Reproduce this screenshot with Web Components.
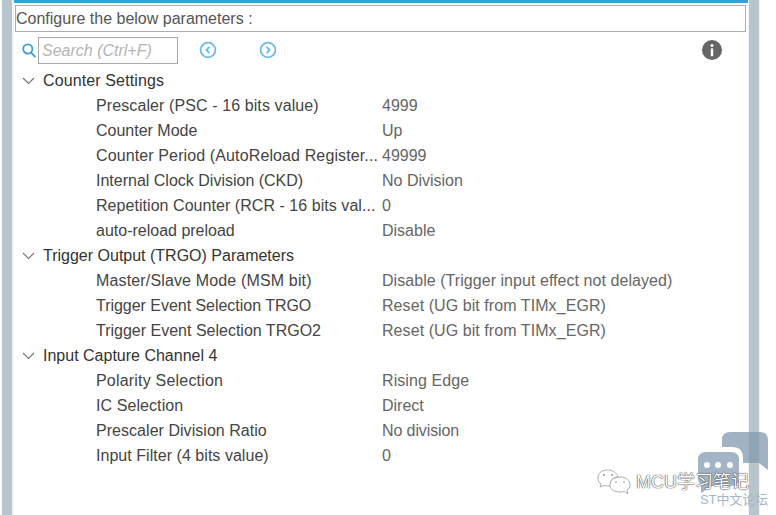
<!DOCTYPE html>
<html>
<head>
<meta charset="utf-8">
<title>Parameters</title>
<style>
  html, body { margin: 0; height: 100%; background: #fff; }
  body { font-family: "Liberation Sans", Arial, sans-serif; font-size: 16px; color: #444; overflow: hidden; }
</style>
</head>
<body>
<config-panel>
  <tool-bar></tool-bar>
  <param-group title="Counter Settings" track=".12">
    <param-row name="Prescaler (PSC - 16 bits value)" value="4999" track=".1"></param-row>
    <param-row name="Counter Mode" value="Up"></param-row>
    <param-row name="Counter Period (AutoReload Register..." value="49999" track=".12"></param-row>
    <param-row name="Internal Clock Division (CKD)" value="No Division"></param-row>
    <param-row name="Repetition Counter (RCR - 16 bits val..." value="0" track=".05"></param-row>
    <param-row name="auto-reload preload" value="Disable"></param-row>
  </param-group>
  <param-group title="Trigger Output (TRGO) Parameters">
    <param-row name="Master/Slave Mode (MSM bit)" value="Disable (Trigger input effect not delayed)" track=".15" vtrack=".05"></param-row>
    <param-row name="Trigger Event Selection TRGO" value="Reset (UG bit from TIMx_EGR)" track="-.03" vtrack=".07"></param-row>
    <param-row name="Trigger Event Selection TRGO2" value="Reset (UG bit from TIMx_EGR)" vtrack=".07"></param-row>
  </param-group>
  <param-group title="Input Capture Channel 4">
    <param-row name="Polarity Selection" value="Rising Edge" track=".2" vtrack=".08"></param-row>
    <param-row name="IC Selection" value="Direct" track=".08"></param-row>
    <param-row name="Prescaler Division Ratio" value="No division" track=".04" vtrack="-.1"></param-row>
    <param-row name="Input Filter (4 bits value)" value="0" track=".04"></param-row>
  </param-group>
</config-panel>
<wechat-mark></wechat-mark>

<script>
  // the window: grey rails left and right, white panel between
  class ConfigPanel extends HTMLElement {
    constructor() {
      super();
      this.attachShadow({ mode: 'open' });
      this.shadowRoot.innerHTML = `
        <style>
          :host { display: grid; grid-template-columns: 2px 10px 2px 734px 1px 10px 1px 1fr; height: 515px; }
          .rail { background: #b9c5cc; }
          .soft { background: #f1f3f5; }
          .main { min-width: 0; }
          .top { height: 3px; background: #34a3dc; }
          .title {
            height: 27px; margin: 2px 2px 0 1px; box-sizing: border-box;
            border: 1px solid #a9adb2; line-height: 26px; color: #555;
          }
          .body { padding-top: 4px; }
        </style>
        <div></div><div class="rail"></div><div class="soft"></div>
        <div class="main">
          <div class="top"></div>
          <div class="title">Configure the below parameters :</div>
          <div class="body"><slot></slot></div>
        </div>
        <div class="soft"></div><div class="rail"></div><div class="soft"></div><div></div>`;
    }
  }

  class ToolBar extends HTMLElement {
    constructor() {
      super();
      this.attachShadow({ mode: 'open' });
      this.shadowRoot.innerHTML = `
        <style>
          :host { display: flex; align-items: center; height: 28px; padding-left: 8px; margin-bottom: 4px; }
          svg { display: block; flex: none; }
          .search {
            width: 140px; height: 27px; box-sizing: border-box; margin-left: 2px; padding-left: 3px;
            border: 1px solid #a9a9a9; font-style: italic; color: #b4b4b4; line-height: 25px;
          }
          .prev { margin-left: 21px; }
          .next { margin-left: 42px; }
          .info { margin-left: 425px; }
        </style>
        <svg width="14" height="15" viewBox="0 0 14 15" fill="none" stroke="#3a9fdc" stroke-width="1.8">
          <circle cx="5.8" cy="6" r="4.6"/><path d="M9 9.4l4.4 4.8"/>
        </svg>
        <div class="search">Search (Ctrl+F)</div>
        <svg class="prev" width="18" height="18" viewBox="0 0 18 18" fill="none" stroke="#6cbce8" stroke-width="1.8">
          <circle cx="9" cy="9" r="7.4"/><path d="M10.5 5.8L7.3 9l3.2 3.2"/>
        </svg>
        <svg class="next" width="18" height="18" viewBox="0 0 18 18" fill="none" stroke="#6cbce8" stroke-width="1.8">
          <circle cx="9" cy="9" r="7.4"/><path d="M7.5 5.8L10.7 9l-3.2 3.2"/>
        </svg>
        <svg class="info" width="20" height="20" viewBox="0 0 20 20">
          <circle cx="10" cy="10" r="10" fill="#666"/>
          <rect x="8.8" y="8.4" width="2.4" height="7.8" fill="#fff"/>
          <circle cx="10" cy="5.6" r="1.5" fill="#fff"/>
        </svg>`;
    }
  }

  class ParamGroup extends HTMLElement {
    constructor() {
      super();
      this.attachShadow({ mode: 'open' });
      this.shadowRoot.innerHTML = `
        <style>
          :host { display: block; }
          .head { display: flex; align-items: center; height: 25px; color: #333; }
          svg { margin: 0 8px 0 8px; flex: none; }
        </style>
        <div class="head">
          <svg width="13" height="8" viewBox="0 0 13 8" fill="none" stroke="#777" stroke-width="1.2">
            <path d="M1 1l5.5 5.5L12 1"/>
          </svg>
          <span id="title"></span>
        </div>
        <slot></slot>`;
      const title = this.shadowRoot.getElementById('title');
      title.textContent = this.getAttribute('title');
      title.style.letterSpacing = (this.getAttribute('track') || 0) + 'px';
    }
  }

  class ParamRow extends HTMLElement {
    constructor() {
      super();
      this.attachShadow({ mode: 'open' });
      this.shadowRoot.innerHTML = `
        <style>
          :host { display: grid; grid-template-columns: 286px 1fr; height: 25px; line-height: 25px; padding-left: 82px; white-space: nowrap; }
          .val { color: #666; }
        </style>
        <span id="name"></span><span id="val" class="val"></span>`;
      const name = this.shadowRoot.getElementById('name');
      const val = this.shadowRoot.getElementById('val');
      name.textContent = this.getAttribute('name');
      val.textContent = this.getAttribute('value');
      // the source font runs a little wider or narrower per string
      name.style.letterSpacing = (this.getAttribute('track') || 0) + 'px';
      val.style.letterSpacing = (this.getAttribute('vtrack') || 0) + 'px';
    }
  }

  // watermark that lies over the screenshot
  class WechatMark extends HTMLElement {
    constructor() {
      super();
      this.attachShadow({ mode: 'open' });
      this.shadowRoot.innerHTML = `
        <style>
          :host { position: absolute; left: 596px; top: 430px; width: 180px; height: 85px; font-family: "Liberation Sans", "Noto Sans CJK SC", sans-serif; }
          svg { position: absolute; left: 0; top: 0; }
          .name { position: absolute; left: 40px; top: 40px; font-size: 18px; line-height: 24px; color: #fff; white-space: nowrap; text-shadow: 0 0 1px #222, 0 0 1px #222; }
          .sub { position: absolute; left: 104px; top: 60px; font-size: 13px; line-height: 17px; margin-top: 1px; letter-spacing: -.1px; color: #a3b7c8; white-space: nowrap; }
        </style>
        <svg width="180" height="85" viewBox="596 430 180 85">
          <path d="M730 432H760Q768 432 768 440V470L759 463H743V458Q743 447 732 447H722V440Q722 432 730 432Z" fill="#8298ae" fill-opacity=".75"/>
          <path d="M706 452H731Q739 452 739 460V478Q739 486 731 486H712L701 493V484Q698 483 698 478V460Q698 452 706 452Z" fill="#a3b4c6"/>
          <circle cx="707" cy="465" r="3" fill="#fff"/><circle cx="718" cy="465" r="3" fill="#fff"/><circle cx="730" cy="465" r="3" fill="#fff"/>
          <g fill="#fff" stroke="#999" stroke-width=".8">
            <path d="M608 470C602 470 598 473 598 478C598 481 599 483 601 484L600 487L604 485.500C606 486 610 486 611 485.500C609 480 614 477 618 477C617 473 613 470 608 470Z"/>
            <path d="M620 477C614 477 610 480 610 485C610 489 614 492 620 492C622 492 623 492 624 491.500L628 493.500L627 490C629 489 630 487 630 485C630 480 626 477 620 477Z"/>
          </g>
          <g fill="#888">
            <circle cx="604" cy="475" r=".9"/><circle cx="612" cy="475" r=".9"/>
            <circle cx="616" cy="482" r=".8"/><circle cx="624" cy="482" r=".8"/>
          </g>
        </svg>
        <div class="name">MCU学习笔记</div>
        <div class="sub">ST中文论坛</div>`;
    }
  }

  customElements.define('config-panel', ConfigPanel);
  customElements.define('tool-bar', ToolBar);
  customElements.define('param-group', ParamGroup);
  customElements.define('param-row', ParamRow);
  customElements.define('wechat-mark', WechatMark);
</script>
</body>
</html>
